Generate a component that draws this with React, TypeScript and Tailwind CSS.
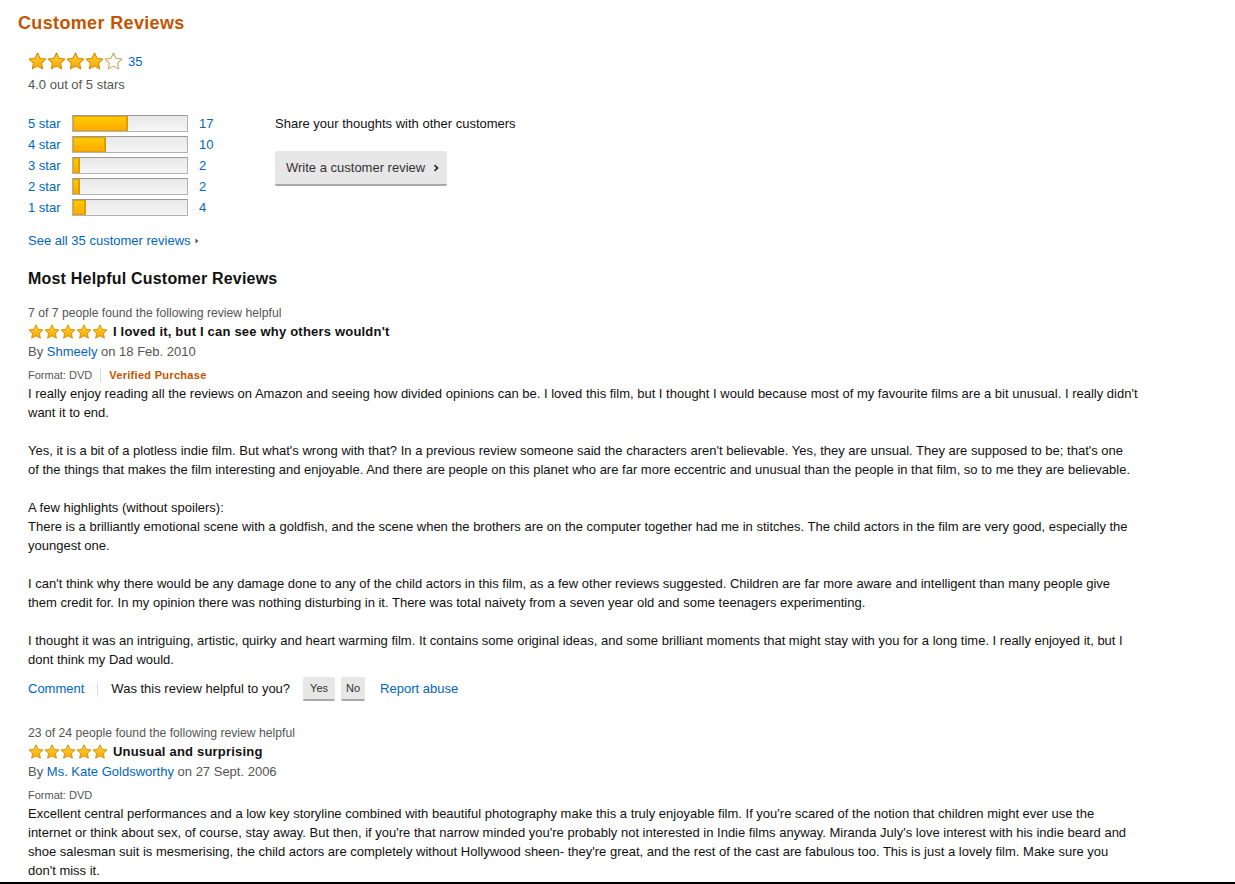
import type { ReactNode } from 'react'

const font = { fontFamily: '"Liberation Sans", Arial, sans-serif' }

function Star({ size, fill = 'full', gid }: { size: number; fill?: 'full' | 'empty'; gid: string }) {
  return (
    <svg width={size} height={size} viewBox="0 0 24 24" className="shrink-0">
      <defs>
        <linearGradient id={gid} x1="0" y1="0" x2="0" y2="1">
          <stop offset="0" stopColor="#ffd63a" />
          <stop offset="1" stopColor="#f7a500" />
        </linearGradient>
      </defs>
      <path
        d="M12 1.2l3.2 6.7 7.3 1-5.3 5.1 1.3 7.3L12 17.8l-6.5 3.5 1.3-7.3-5.3-5.1 7.3-1z"
        fill={fill === 'full' ? `url(#${gid})` : '#fff'}
        stroke={fill === 'full' ? '#d48a00' : '#c9a15a'}
        strokeWidth="1.3"
        strokeLinejoin="round"
      />
    </svg>
  )
}

function Stars({ count, size, prefix }: { count: number; size: number; prefix: string }) {
  return (
    <div className="flex items-center">
      {[0, 1, 2, 3, 4].map((i) => (
        <Star key={i} size={size} fill={i < count ? 'full' : 'empty'} gid={`${prefix}-${i}`} />
      ))}
    </div>
  )
}

const histogram = [
  { label: '5 star', count: 17 },
  { label: '4 star', count: 10 },
  { label: '3 star', count: 2 },
  { label: '2 star', count: 2 },
  { label: '1 star', count: 4 },
]

function GrayButton({ children, className }: { children: ReactNode; className?: string }) {
  return (
    <button
      className={`bg-[#e7e7e7] border-b-2 border-[#a9a9a9] rounded-[2px] text-[#333] ${className ?? ''}`}
    >
      {children}
    </button>
  )
}

function Review({
  helpful,
  title,
  author,
  date,
  verified,
  body,
  prefix,
  actions,
}: {
  helpful: string
  title: string
  author: string
  date: string
  verified?: boolean
  body: ReactNode
  prefix: string
  actions?: boolean
}) {
  return (
    <div>
      <div className="text-[12.2px] leading-[17px] text-[#555]">{helpful}</div>
      <div className="flex items-center gap-[5px] h-[20px]">
        <Stars count={5} size={16} prefix={prefix} />
        <span className="text-[13px] font-bold tracking-[0.2px] text-[#111]">{title}</span>
      </div>
      <div className="text-[13px] leading-[19px] text-[#555]">
        By <span className="text-[#0066c0]">{author}</span> on {date}
      </div>
      <div className="flex items-center mt-[7px] text-[11px] leading-[15px] text-[#555]">
        <span>Format: DVD</span>
        {verified && (
          <>
            <span className="mx-[8px] h-[13px] w-px bg-[#ddd]" />
            <span className="font-bold tracking-[0.3px] text-[#c45500]">Verified Purchase</span>
          </>
        )}
      </div>
      <div className="mt-px text-[13px] leading-[19px] text-[#111]">{body}</div>
      {actions && (
        <div className="flex items-center mt-[8px] h-[24px] text-[13px]">
          <span className="text-[#0066c0]">Comment</span>
          <span className="mx-[13px] h-[15px] w-px bg-[#ddd]" />
          <span className="text-[#111]">Was this review helpful to you?</span>
          <GrayButton className="ml-[13px] h-[24px] w-[32px] text-[11px]">Yes</GrayButton>
          <GrayButton className="ml-[6px] h-[24px] w-[24px] text-[11px]">No</GrayButton>
          <span className="ml-[15px] text-[#0066c0]">Report abuse</span>
        </div>
      )}
    </div>
  )
}

export default function App() {
  return (
    <div className="h-[884px] bg-white flex flex-col overflow-hidden" style={font}>
      <div className="flex-1 overflow-hidden pt-[11px] pl-[18px]">
        <h2 className="text-[18px] leading-[24px] font-bold tracking-[0.35px] text-[#c45500]">Customer Reviews</h2>

        <div className="pl-[10px] w-[1120px]">
          {/* Summary */}
          <div className="mt-[17px] flex items-center h-[19px]">
            <Stars count={4} size={19} prefix="sum" />
            <span className="ml-[5px] text-[13px] text-[#0066c0]">35</span>
          </div>
          <div className="mt-[4px] text-[13px] leading-[19px] text-[#555]">4.0 out of 5 stars</div>

          {/* Histogram + write review */}
          <div className="mt-[19px] flex">
            <div className="w-[247px]">
              {histogram.map((row) => (
                <div key={row.label} className="flex items-center h-[21px] text-[13px]">
                  <span className="w-[44px] text-[#0066c0]">{row.label}</span>
                  <div className="w-[116px] h-[17px] border border-[#b3b3b3] border-t-[#999] bg-gradient-to-b from-[#e8e8e8] to-[#f6f6f6]">
                    <div
                      className="h-full bg-gradient-to-b from-[#ffce00] to-[#ffa700] border-r border-[#d89a00] shadow-[inset_0_0_0_1px_#e5a100]"
                      style={{ width: `${(row.count / 35) * 100}%` }}
                    />
                  </div>
                  <span className="ml-[11px] text-[#0066c0]">{row.count}</span>
                </div>
              ))}
              <div className="mt-[13px] flex items-center text-[13px] leading-[19px] text-[#0066c0]">
                See all 35 customer reviews
                <svg width="6" height="8" viewBox="0 0 6 8" className="ml-[3px]">
                  <path d="M1.5 1.5L4.5 4 1.5 6.5z" fill="#555" />
                </svg>
              </div>
            </div>

            <div>
              <div className="h-[21px] flex items-center text-[13px] text-[#111]">
                Share your thoughts with other customers
              </div>
              <GrayButton className="mt-[17px] h-[35px] w-[172px] text-[13px] flex items-center pl-[11px]">
                Write a customer review
                <svg width="8" height="8" viewBox="0 0 8 8" className="ml-[7px]">
                  <path d="M2.5 1.2L5.5 4 2.5 6.8" stroke="#333" strokeWidth="1.8" fill="none" />
                </svg>
              </GrayButton>
            </div>
          </div>

          <h3 className="mt-[18px] text-[16px] leading-[22px] font-bold tracking-[0.2px] text-[#111]">
            Most Helpful Customer Reviews
          </h3>

          <div className="mt-[15px]">
            <Review
              prefix="r1"
              helpful="7 of 7 people found the following review helpful"
              title="I loved it, but I can see why others wouldn't"
              author="Shmeely"
              date="18 Feb. 2010"
              verified
              actions
              body={
                <>
                  I really enjoy reading all the reviews on Amazon and seeing how divided opinions can be. I loved
                  this film, but I thought I would because most of my favourite films are a bit unusual. I really
                  didn't want it to end.
                  <br />
                  <br />
                  Yes, it is a bit of a plotless indie film. But what's wrong with that? In a previous review someone
                  said the characters aren't believable. Yes, they are unsual. They are supposed to be; that's one
                  <br />
                  of the things that makes the film interesting and enjoyable. And there are people on this planet who
                  are far more eccentric and unusual than the people in that film, so to me they are believable.
                  <br />
                  <br />
                  A few highlights (without spoilers):
                  <br />
                  There is a brilliantly emotional scene with a goldfish, and the scene when the brothers are on the
                  computer together had me in stitches. The child actors in the film are very good, especially the
                  youngest one.
                  <br />
                  <br />
                  I can't think why there would be any damage done to any of the child actors in this film, as a few
                  other reviews suggested. Children are far more aware and intelligent than many people give them
                  credit for. In my opinion there was nothing disturbing in it. There was total naivety from a seven
                  year old and some teenagers experimenting.
                  <br />
                  <br />
                  I thought it was an intriguing, artistic, quirky and heart warming film. It contains some original
                  ideas, and some brilliant moments that might stay with you for a long time. I really enjoyed it, but
                  I dont think my Dad would.
                </>
              }
            />
          </div>

          <div className="mt-[24px]">
            <Review
              prefix="r2"
              helpful="23 of 24 people found the following review helpful"
              title="Unusual and surprising"
              author="Ms. Kate Goldsworthy"
              date="27 Sept. 2006"
              body={
                <>
                  Excellent central performances and a low key storyline combined with beautiful photography make this
                  a truly enjoyable film. If you're scared of the notion that children might ever use the internet or
                  think about sex, of course, stay away. But then, if you're that narrow minded you're probably not
                  interested in Indie films anyway. Miranda July's love interest with his indie beard and shoe salesman
                  suit is mesmerising, the child actors are completely without Hollywood sheen- they're great, and the
                  rest of the cast are fabulous too. This is just a lovely film. Make sure you don't miss it.
                </>
              }
            />
          </div>
        </div>
      </div>
      <div className="h-[2px] bg-black shrink-0" />
    </div>
  )
}
